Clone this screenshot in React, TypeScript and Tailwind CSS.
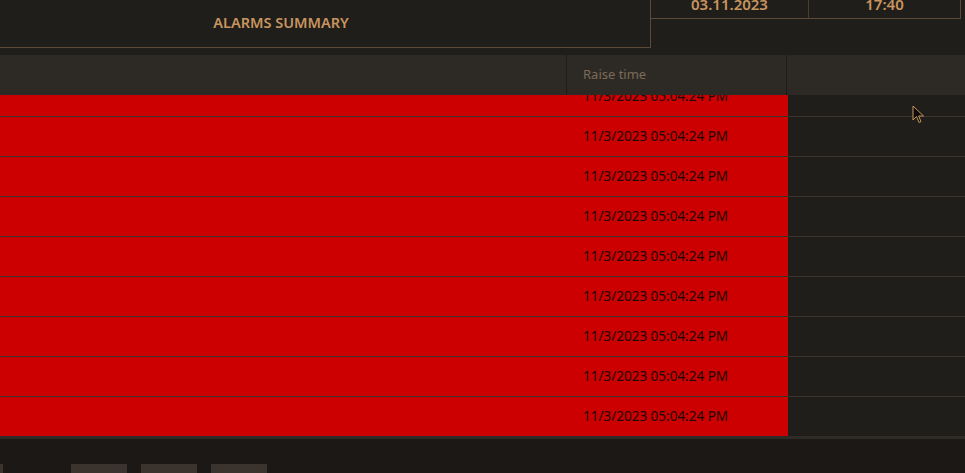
import React from "react";

const ROWS = Array.from({ length: 9 }, () => "11/3/2023 05:04:24 PM");
const BUTTONS = [0, 1, 2];

function Cursor() {
  return (
    <svg
      className="absolute left-[912px] top-[105px]"
      width="14"
      height="20"
      viewBox="0 0 14 20"
    >
      <path
        d="M1 1 L1 15 L4.5 11.5 L7 17.5 L9 16.6 L6.6 11 L11.5 11 Z"
        fill="#0d0b09"
        stroke="#c8955e"
        strokeWidth="1"
        strokeLinejoin="miter"
      />
    </svg>
  );
}

export default function App() {
  return (
    <div className="relative flex h-[473px] w-[965px] flex-col overflow-hidden bg-[#201e1a] font-['Noto_Sans',sans-serif]">
      {/* Top bar — title panel and date/time box */}
      <div className="flex h-[55px] items-start">
        <div className="flex h-[48px] w-[651px] items-center justify-center border-r border-b border-[#5b4a38] pr-[88px] pb-[2px]">
          <span className="text-[14.5px] font-semibold text-[#c8955e]">
            ALARMS SUMMARY
          </span>
        </div>
        <div className="-mt-[10px] flex h-[29px] w-[310px] border-r border-b border-[#5b4a38]">
          <div className="flex w-[158px] items-center justify-center border-r border-[#4a3d30] text-[15px] font-semibold text-[#c8955e]">
            03.11.2023
          </div>
          <div className="flex flex-1 items-center justify-center text-[15px] font-semibold text-[#c8955e]">
            17:40
          </div>
        </div>
      </div>

      {/* Table header */}
      <div className="flex h-[40px] bg-[#2d2a25] text-[13px] text-[#7c6b58]">
        <div className="w-[567px] border-r border-[#1e1b18]" />
        <div className="flex w-[220px] items-center border-r border-[#1e1b18] px-4">
          Raise time
        </div>
        <div className="flex-1" />
      </div>

      {/* Table body, scrolled part way down */}
      <div className="h-[341px] overflow-hidden">
        <div className="-mt-[18px]">
          {ROWS.map((t, i) => (
            <div key={i} className="flex h-[40px] border-b border-[#3a332d]">
              <div className="w-[568px] bg-[#cc0000]" />
              <div className="flex w-[220px] items-center bg-[#cc0000] pl-[15px] text-[13.5px] text-[#1c0606]">
                {t}
              </div>
              <div className="flex-1 bg-[#201e1a]" />
            </div>
          ))}
        </div>
      </div>

      {/* Footer with buttons */}
      <div className="flex flex-1 items-start overflow-hidden border-t-[3px] border-[#2f2b27] bg-[#1b1816] pt-[25px]">
        <div className="h-[30px] w-[3px] bg-[#3b342e]" />
        <div className="ml-[68px] flex gap-[14px]">
          {BUTTONS.map((b) => (
            <div key={b} className="h-[30px] w-[56px] bg-[#3b342e]" />
          ))}
        </div>
      </div>

      <Cursor />
    </div>
  );
}
